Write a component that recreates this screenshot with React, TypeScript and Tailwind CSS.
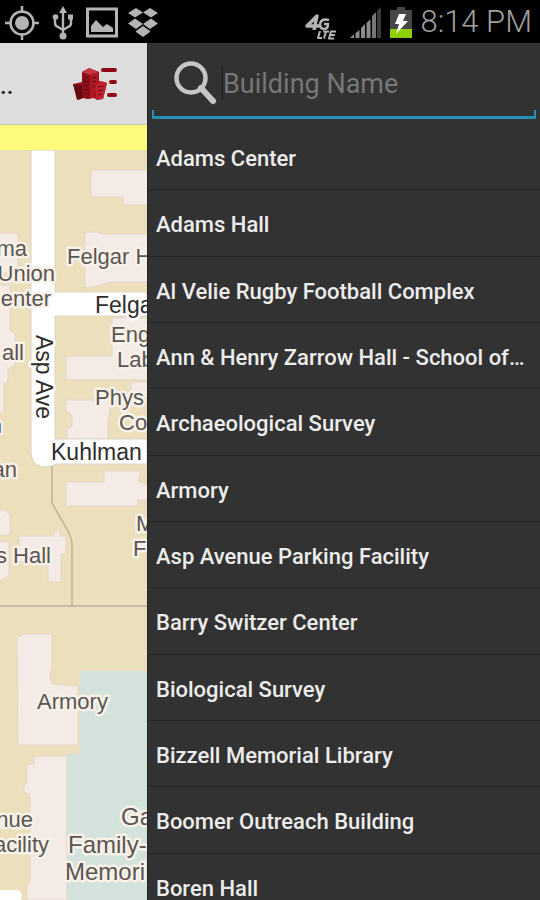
import React from "react";

const buildings = [
  "Adams Center",
  "Adams Hall",
  "Al Velie Rugby Football Complex",
  "Ann & Henry Zarrow Hall - School of…",
  "Archaeological Survey",
  "Armory",
  "Asp Avenue Parking Facility",
  "Barry Switzer Center",
  "Biological Survey",
  "Bizzell Memorial Library",
  "Boomer Outreach Building",
  "Boren Hall",
];

// Label positions share the coordinate space of the map's viewBox
const mapLabels = [
  { text: "ma", x: 27, y: 256, anchor: "end" },
  { text: "Union", x: 55, y: 281, anchor: "end" },
  { text: "enter", x: 51, y: 306, anchor: "end" },
  { text: "all", x: 24, y: 360, anchor: "end" },
  { text: "n", x: 2, y: 433, anchor: "end" },
  { text: "an", x: 17, y: 477, anchor: "end" },
  { text: "s Hall", x: 51, y: 563, anchor: "end" },
  { text: "Felgar H", x: 67, y: 264, anchor: "start" },
  { text: "Eng", x: 111, y: 342, anchor: "start" },
  { text: "Lab", x: 117, y: 367, anchor: "start" },
  { text: "Phys", x: 95, y: 405, anchor: "start" },
  { text: "Co", x: 119, y: 430, anchor: "start" },
  { text: "M", x: 136, y: 531, anchor: "start" },
  { text: "F", x: 133, y: 556, anchor: "start" },
  { text: "Armory", x: 37, y: 709, anchor: "start" },
  { text: "nue", x: 33, y: 827, anchor: "end" },
  { text: "acility", x: 49, y: 852, anchor: "end" },
] as const;

function StatusBar() {
  return (
    <div className="flex h-[43px] shrink-0 items-center justify-between bg-black pr-2 pl-1">
      <div className="flex items-center gap-3 text-[#b4b4b4]">
        <svg width="36" height="36" viewBox="0 0 36 36" fill="none" stroke="currentColor">
          <circle cx="18" cy="19" r="11.5" strokeWidth="2.5" />
          <circle cx="18" cy="19" r="7" fill="currentColor" stroke="none" />
          <path d="M18 2v7M18 29v7M1 19h7M28 19h7" strokeWidth="2.5" />
        </svg>
        <svg width="22" height="36" viewBox="0 0 22 36" fill="none" stroke="currentColor">
          <path d="M11 7v24M3 15v4q0 3 3 4l5 3M19 15v4q0 3-3 4l-5 3" strokeWidth="2.4" />
          <path d="M11 2l4 7H7z" fill="currentColor" stroke="none" />
          <circle cx="11" cy="32" r="3.5" fill="currentColor" stroke="none" />
          <circle cx="3.5" cy="13" r="2.8" fill="currentColor" stroke="none" />
          <path d="M16 10.500h5v5h-5z" fill="currentColor" stroke="none" />
        </svg>
        <svg width="32" height="36" viewBox="0 0 32 36" fill="none" stroke="currentColor">
          <path d="M1.500 5h29v27h-29z" strokeWidth="3" />
          <path d="M5 28v-6l5-6 7 7 4-3 6 4v4z" fill="currentColor" stroke="none" />
        </svg>
        <svg className="-ml-1" width="34" height="36" viewBox="0 0 34 36" fill="currentColor">
          <path d="M10 4l7 4.500-8 5L2 9zM24 4l8 5-7 4.500L17 8.500zM9 14.500l8 5.500-7 5-8-5.500zM25 14.500l7 5-8 5.500-7-5zM17 22l7 5v1l-7 5-7-5v-1z" />
        </svg>
      </div>

      <div className="flex items-center">
        <svg width="34" height="36" viewBox="0 0 34 36" fill="none" stroke="#b4b4b4" strokeLinejoin="round">
          <path d="M12 26l3-14-10 10h12" strokeWidth="3.500" />
          <path d="M27 16q-8-2-9 4 0 5 4 5 4 0 4-5h-4" strokeWidth="2.500" />
          <path d="M18 27l-2 7h4M21 27.500h6M24 27.500l-2 7M34 27.500h-5l-2 7h5M28 31h5" strokeWidth="2" />
        </svg>
        <svg className="ml-3" width="34" height="36" viewBox="0 0 34 36" fill="#8c8c8c">
          <path d="M2 34l4-4v4zM7.500 29l4-3v8h-4zM13 24l4-4v14h-4zM18.500 19l4-4v19h-4z" />
          <path d="M24 12l4-4v26h-4z" fill="#777" />
          <path d="M29 7l4-4v31h-4z" fill="#3a3a3a" />
        </svg>
        <svg className="ml-2" width="22" height="36" viewBox="0 0 22 36">
          <path d="M7 3h8v3h7v19H0V6h7z" fill="#464646" />
          <path d="M0 25h22v9H0z" fill="#8fcf00" />
          <path d="M9 10h7l-3 7h5L6 30l3-10H5z" fill="#fff" />
        </svg>
        <span className="ml-2 text-[31px] leading-9 font-light text-[#a0a0a0]">8:14 PM</span>
      </div>
    </div>
  );
}

function BuildingsIcon() {
  return (
    <svg width="46" height="34" viewBox="0 0 46 34">
      <path d="M0 17l9-2V5l7-4 10 4v9l8 2-4 16-6 1-3-2-6 1-5-1-5 2z" fill="#9d1420" />
      <path d="M9 5l8 3v24l-6-1z" fill="#8b0d18" />
      <path d="M9 5l7-4 10 4-9 3z" fill="#c23842" />
      <path d="M0 17l9 1 1 13-6 2z" fill="#650a13" />
      <path d="M17 8l9-3-1 12-4 14h-4z" fill="#ad1824" />
      <path d="M23 17l5-3 6 2-4 16h-7z" fill="#c3202d" />
      <path d="M11 10l4 1M11 14l4 1M11 18l4 1M11 22l4 1M19 11l4-1M19 15l4-1M19 19h3M25 20l6-1M25 24l5-1M25 28l4-1M3 21l4 1M3 25l4 1" stroke="#5f0d17" strokeWidth="1" />
      <path d="M30 3h12M38 15h4M36 28h6" stroke="#8f0714" strokeWidth="4" strokeLinecap="round" />
    </svg>
  );
}

function CampusMap() {
  return (
    <svg
      className="block min-h-0 w-full flex-1"
      viewBox="0 150 147 750"
      preserveAspectRatio="xMinYMin slice"
      role="img"
      aria-label="Campus map"
    >
      <rect y="150" width="147" height="750" fill="#ecdfbb" />
      <path d="M80 671h67v229H67V754h13z" fill="#d3e3dc" />

      {/* buildings */}
      <g fill="#f4ebe7" stroke="#e4d6c8" strokeWidth="1">
        <path d="M91 170h60v35h-28v-8H91z" />
        <path d="M85 232h12l5 2h50v48h-40l-15 4-12 2z" />
        <path d="M-2 233h20v40h-20zM-2 285h12v45l5 4v31l-7 4v12l-4 3v28h-6z" />
        <path d="M66 356h46v-38h40v62H66zM131 382h20v16h-20z" />
        <path d="M66 400h46l-4 20v19H67v-10l5-3v-11l-6-3z" />
        <path d="M66 482h38v-11h37l-3 10 13 5v14h-13v6H66z" />
        <path d="M-2 510h7l5 5v20H-2zM19 536h35v-5h6v5h6v18h-5v28H48v-20H19zM-2 542h11v34l-11 6z" />
        <path d="M17 638l7-4h28v30l-2 12 2 8 26 2v59H18z" />
        <path d="M34 756h33v144H27v-15l3-5v-86l-6-2v-7l3-2v-19h7z" />
      </g>
      <path d="M-2 890H18q5 2 3 12H-2z" fill="#fff" />

      {/* paths */}
      <path d="M52 465v38l16 28q4 7 4 14v61M0 606h147" fill="none" stroke="#bbb1a0" strokeWidth="1.500" />

      {/* roads */}
      <path
        d="M31 150h24v142h92v24H55v123h92v25H55q-3 3-12 3-11-2-12-14z"
        fill="#fff"
        stroke="#dad3c5"
        strokeWidth="1"
      />

      <g
        className="[paint-order:stroke]"
        fontSize="22"
        fill="#5b5652"
        stroke="#f7f1e9"
        strokeWidth="5"
        strokeLinejoin="round"
        fontFamily="Liberation Sans, sans-serif"
      >
        {mapLabels.map((label) => (
          <text key={label.text} x={label.x} y={label.y} textAnchor={label.anchor}>
            {label.text}
          </text>
        ))}
        <g fontSize="24">
          <text x="121" y="825">Ga</text>
          <text x="68" y="853">Family-</text>
          <text x="65" y="880">Memori</text>
        </g>
        <g fontSize="23" fill="#2f2d2b" stroke="#fff">
          <text x="95" y="313">Felga</text>
          <text x="51" y="460">Kuhlman</text>
          <text transform="translate(36 335) rotate(90)">Asp Ave</text>
        </g>
      </g>
    </svg>
  );
}

function BuildingDrawer() {
  return (
    <aside className="flex min-w-0 flex-1 flex-col border-l border-[#262626] bg-[#323232]">
      <div className="shrink-0 px-1 pt-1">
        <label className="flex h-[63px] items-center pt-2 pl-5">
          <svg className="shrink-0" width="46" height="46" viewBox="0 0 46 46" fill="none" stroke="#c6c6c6">
            <circle cx="19" cy="18" r="14.500" strokeWidth="4.500" />
            <path d="M29 28l12 13" strokeWidth="6" strokeLinecap="round" />
          </svg>
          <span className="sr-only">Building Name</span>
          <span className="ml-1 h-9 w-px shrink-0 bg-[#1c1c1c]" />
          <input
            type="text"
            placeholder="Building Name"
            className="min-w-0 flex-1 bg-transparent pt-0.5 text-[27px] leading-9 text-white outline-none placeholder:text-[#777777]"
          />
        </label>
        <div className="h-[9px] border-x-2 border-b-3 border-[#2390b4]" />
      </div>

      <ul className="mt-[5px]">
        {buildings.map((name) => (
          <li key={name} className="h-[66px] border-b border-[#252525] nth-[3n+2]:h-[67px]">
            <button
              type="button"
              className="block h-full w-full truncate px-2 pt-1 text-left text-[22px] leading-8 font-medium text-[#ececec]"
            >
              {name}
            </button>
          </li>
        ))}
      </ul>
    </aside>
  );
}

export default function App() {
  return (
    <div className="flex h-screen flex-col overflow-hidden bg-black font-[Roboto,sans-serif]">
      <StatusBar />
      <div className="flex min-h-0 flex-1">
        <main className="flex w-[147px] shrink-0 flex-col">
          <header className="flex h-[82px] shrink-0 items-center justify-between border-b border-[#c4c4b4] bg-[#dddddd] pr-7">
            <span className="pt-1 text-2xl font-medium text-[#222222]">..</span>
            <button type="button" aria-label="Building list">
              <BuildingsIcon />
            </button>
          </header>
          <div className="h-[25px] shrink-0 bg-[#fdfb7c]" />
          <CampusMap />
        </main>
        <BuildingDrawer />
      </div>
    </div>
  );
}
